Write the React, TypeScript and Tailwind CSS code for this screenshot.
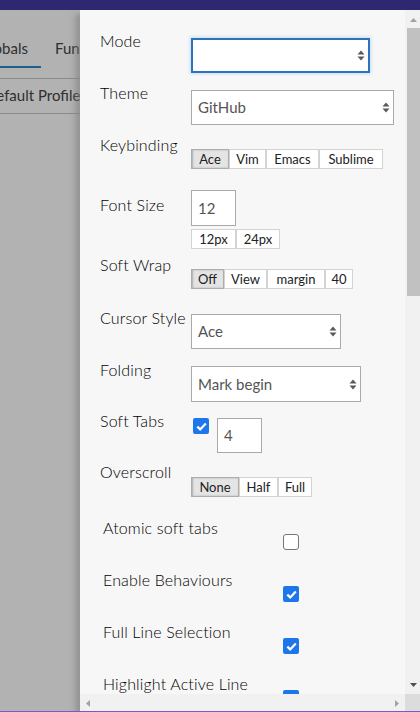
import type { ReactNode } from 'react';

type Choice = { label: string; width: string };

const LABEL =
  'w-[91px] shrink-0 whitespace-nowrap text-[16px] leading-[20px] font-light tracking-[0.15px] text-black';

function Arrows() {
  return (
    <svg width="8" height="11" viewBox="0 0 8 11" className="shrink-0">
      <path d="M4 0.5 7.5 4.5H0.5Z" fill="#5a5a5a" />
      <path d="M0.5 6.5H7.5L4 10.5Z" fill="#5a5a5a" />
    </svg>
  );
}

function Select({ value, className }: { value?: string; className: string }) {
  return (
    <div
      className={`flex items-center justify-between bg-white pl-[6px] pr-[3px] text-[15px] text-[#555] ${className}`}
    >
      {value && <span>{value}</span>}
      <div className="flex-1" />
      <Arrows />
    </div>
  );
}

function ButtonGroup({ items, selected }: { items: Choice[]; selected?: string }) {
  return (
    <div className="flex">
      {items.map((item) => (
        <div
          key={item.label}
          className={`flex h-[20px] items-center justify-center border text-[13px] leading-[16px] text-[#222] ${item.width} ${
            item.label === selected
              ? 'border-[#adadad] bg-[#e4e4e4] shadow-[inset_1px_0_2px_0_#adadad]'
              : 'border-[#d3d3d3] bg-white'
          }`}
        >
          {item.label}
        </div>
      ))}
    </div>
  );
}

function Checkbox({ checked }: { checked: boolean }) {
  if (!checked) {
    return <div className="h-[16px] w-[16px] rounded-[3px] border border-[#767676] bg-white" />;
  }
  return (
    <div className="flex h-[16px] w-[16px] items-center justify-center rounded-[2px] bg-[#1d76ea]">
      <svg width="11" height="9" viewBox="0 0 11 9">
        <path d="M1.3 4.6 4.2 7.4 9.8 1.4" fill="none" stroke="white" strokeWidth="2.2" />
      </svg>
    </div>
  );
}

function Row({ label, className, children }: { label: string; className: string; children: ReactNode }) {
  return (
    <div className={`flex ${className}`}>
      <div className={LABEL}>{label}</div>
      {children}
    </div>
  );
}

function CheckRow({ label, checked }: { label: string; checked: boolean }) {
  return (
    <div className="flex h-[52px]">
      <div className="w-[183px] shrink-0 whitespace-nowrap pl-[3px] text-[16px] leading-[20px] font-light tracking-[0.15px] text-black">
        {label}
      </div>
      <div className="pt-[16px]">
        <Checkbox checked={checked} />
      </div>
    </div>
  );
}

function VerticalScrollbar() {
  return (
    <div className="flex w-[15px] shrink-0 flex-col bg-[#f1f1f1]">
      <div className="flex h-[17px] justify-center pt-[8px] pl-[1px]">
        <svg width="7" height="4" viewBox="0 0 7 4">
          <path d="M3.5 0 7 4H0Z" fill="#a3a3a3" />
        </svg>
      </div>
      <div className="mt-[1px] ml-[2px] h-[268px] w-[13px] bg-[#c1c1c1]" />
      <div className="flex-1" />
      <div className="flex h-[17px] justify-center pt-[6px] pl-[1px]">
        <svg width="7" height="4" viewBox="0 0 7 4">
          <path d="M0 0H7L3.5 4Z" fill="#505050" />
        </svg>
      </div>
    </div>
  );
}

function HorizontalScrollbar() {
  return (
    <div className="flex h-[17px] shrink-0">
      <div className="flex flex-1 items-center justify-between bg-[#f1f1f1] px-[6px] pt-[1px]">
        <svg width="4" height="7" viewBox="0 0 4 7">
          <path d="M4 0V7L0 3.5Z" fill="#a3a3a3" />
        </svg>
        <svg width="4" height="7" viewBox="0 0 4 7">
          <path d="M0 0 4 3.5 0 7Z" fill="#a3a3a3" />
        </svg>
      </div>
      <div className="w-[15px] bg-[#dcdcdc]" />
    </div>
  );
}

function ProfilePage() {
  return (
    <div className="pt-[28px] text-[15px] leading-[20px] text-[#454545]">
      <div className="flex border-b border-[#c8c8c8] pb-[10px]">
        <div className="w-[41px] overflow-hidden border-b-2 border-[#2b87c8] pb-[8px]">
          <div className="flex justify-end pr-[13px] whitespace-nowrap">Globals</div>
        </div>
        <div className="ml-[14px] whitespace-nowrap">Functions</div>
      </div>
      <div className="border-b border-[#c8c8c8] pt-[6px] pb-[8px]">
        <div className="-ml-[15px] whitespace-nowrap">Default Profile</div>
      </div>
    </div>
  );
}

function SettingsMenu() {
  return (
    <div className="absolute top-0 right-0 bottom-0 flex w-[340px] flex-col bg-[#f7f7f7] shadow-[-5px_4px_5px_rgba(126,126,126,0.55)]">
      <div className="flex min-h-0 flex-1">
        <div className="min-w-0 flex-1 overflow-hidden pl-[20px]">
          <Row label="Mode" className="mt-[21px] h-[52px]">
            <div className="pt-[7px]">
              <Select className="h-[35px] w-[179px] border-2 border-[#2a73bf] shadow-[0_0_3px_1px_rgba(80,150,220,0.25)]" />
            </div>
          </Row>
          <Row label="Theme" className="h-[52px]">
            <div className="pt-[7px]">
              <Select value="GitHub" className="h-[35px] w-[203px] border border-[#a9a9a9]" />
            </div>
          </Row>
          <Row label="Keybinding" className="h-[55px]">
            <div className="pt-[14px]">
              <ButtonGroup
                selected="Ace"
                items={[
                  { label: 'Ace', width: 'w-[38px]' },
                  { label: 'Vim', width: 'w-[37px]' },
                  { label: 'Emacs', width: 'w-[53px]' },
                  { label: 'Sublime', width: 'w-[64px]' },
                ]}
              />
            </div>
          </Row>
          <div className="flex h-[65px]">
            <div className={`${LABEL} pt-[5px]`}>Font Size</div>
            <div>
              <div className="flex h-[36px] w-[45px] items-center border border-[#a9a9a9] bg-white pl-[6px] text-[15px] text-[#555]">
                12
              </div>
              <div className="mt-[3px]">
                <ButtonGroup
                  items={[
                    { label: '12px', width: 'w-[45px]' },
                    { label: '24px', width: 'w-[44px]' },
                  ]}
                />
              </div>
            </div>
          </div>
          <Row label="Soft Wrap" className="h-[53px]">
            <div className="pt-[14px]">
              <ButtonGroup
                selected="Off"
                items={[
                  { label: 'Off', width: 'w-[33px]' },
                  { label: 'View', width: 'w-[43px]' },
                  { label: 'margin', width: 'w-[58px]' },
                  { label: '40', width: 'w-[28px]' },
                ]}
              />
            </div>
          </Row>
          <Row label="Cursor Style" className="h-[52px]">
            <div className="pt-[6px]">
              <Select value="Ace" className="h-[35px] w-[150px] border border-[#a9a9a9]" />
            </div>
          </Row>
          <Row label="Folding" className="h-[51px]">
            <div className="pt-[6px]">
              <Select value="Mark begin" className="h-[36px] w-[170px] border border-[#a9a9a9]" />
            </div>
          </Row>
          <Row label="Soft Tabs" className="h-[51px]">
            <div className="flex items-start pt-[7px] pl-[2px]">
              <Checkbox checked />
              <div className="ml-[8px] flex h-[35px] w-[45px] items-center border border-[#a9a9a9] bg-white pl-[6px] text-[15px] text-[#555]">
                4
              </div>
            </div>
          </Row>
          <Row label="Overscroll" className="h-[56px]">
            <div className="pt-[15px]">
              <ButtonGroup
                selected="None"
                items={[
                  { label: 'None', width: 'w-[48px]' },
                  { label: 'Half', width: 'w-[39px]' },
                  { label: 'Full', width: 'w-[34px]' },
                ]}
              />
            </div>
          </Row>
          <CheckRow label="Atomic soft tabs" checked={false} />
          <CheckRow label="Enable Behaviours" checked />
          <CheckRow label="Full Line Selection" checked />
          <CheckRow label="Highlight Active Line" checked />
        </div>
        <VerticalScrollbar />
      </div>
      <HorizontalScrollbar />
    </div>
  );
}

export default function App() {
  return (
    <div className="flex h-[712px] w-[420px] flex-col overflow-hidden font-[Lato,'Noto_Sans',sans-serif]">
      <div className="h-[10px] shrink-0 bg-[#2e2870]" />
      <div className="relative flex-1 overflow-hidden bg-white">
        <ProfilePage />
        <div className="absolute inset-0 bg-black/30" />
        <SettingsMenu />
      </div>
      <div className="h-px shrink-0 bg-[#7b55d4]" />
    </div>
  );
}
